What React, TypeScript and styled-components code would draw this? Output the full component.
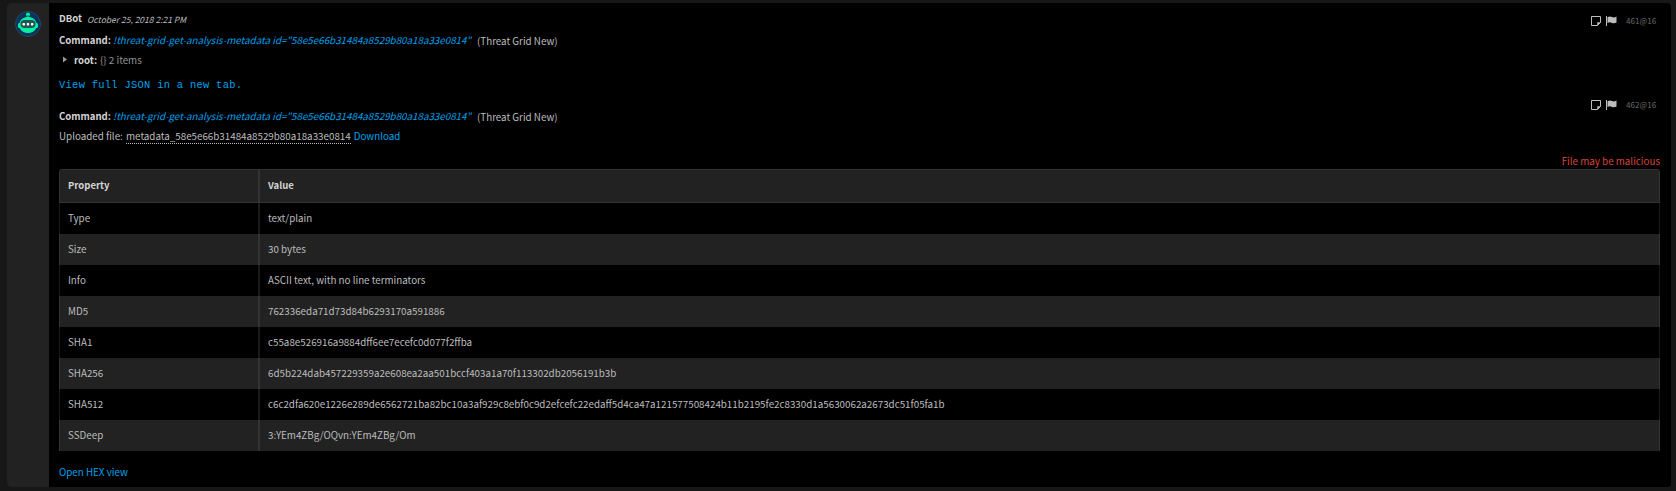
import React from "react";
import styled, { createGlobalStyle } from "styled-components";

const GlobalStyle = createGlobalStyle`
  * { box-sizing: border-box; }
  body {
    margin: 0;
    background: #171717;
    color: #bcbcbc;
    font: 9.81px/20px "Noto Sans CJK SC", "Noto Sans", sans-serif;
    overflow: hidden;
  }
`;

const Page = styled.main`
  height: 491px;
  padding: 3px 5px 4px 7px;
`;

const Entry = styled.article`
  display: flex;
  height: 484px;
  border-radius: 4px;
  overflow: hidden;
  background: #000;
`;

const AvatarRail = styled.aside`
  width: 42px;
  flex: none;
  padding: 8px 0 0 8px;
  background: #222;
  svg { display: block; }
`;

const Content = styled.div`
  flex: 1;
  padding: 6px 11px 0 10px;
`;

const Message = styled.section<{ $height: number }>`
  display: flex;
  justify-content: space-between;
  height: ${(p) => p.$height}px;
`;

const MessageBody = styled.div<{ $offset?: number }>`
  padding-top: ${(p) => p.$offset ?? 0}px;
`;

const Line = styled.div<{ $height: number; $indent?: number; $raise?: number }>`
  display: flex;
  align-items: center;
  height: ${(p) => p.$height}px;
  padding-left: ${(p) => p.$indent ?? 0}px;
  padding-bottom: ${(p) => p.$raise ?? 0}px;
  white-space: pre;
`;

const Author = styled.strong`
  width: 28px;
  padding-bottom: 2px;
  color: #d4d4d4;
  font-weight: 700;
  font-size: 9.5px;
`;

const Timestamp = styled.time`
  font-size: 8.5px;
  font-style: italic;
`;

const Label = styled.strong<{ $width: number }>`
  width: ${(p) => p.$width}px;
  color: #d4d4d4;
  font-weight: 700;
  font-size: 9.6px;
`;

const CommandText = styled.em`
  width: 364px;
  color: #00a0ec;
`;

const Instance = styled.span`
  padding-top: 2px;
`;

const Muted = styled.span`
  color: #949494;
`;

const Link = styled.a<{ $mono?: boolean }>`
  color: #00a0ec;
  ${(p) => p.$mono && `padding-top: 5px; font-family: "Liberation Mono", monospace; font-size: 10.4px; letter-spacing: 0.31px;`}
`;

const FileName = styled.span`
  height: 15px;
  margin: 0 3px 0 1px;
  line-height: 14px;
  border-bottom: 1px dotted #b9b9b9;
`;

const Actions = styled.div`
  display: flex;
  align-items: center;
  height: 23px;
  padding: 1px 4px 0 0;
  color: #bdbdbd;
`;

const EntryId = styled.span`
  width: 30px;
  margin-left: 9px;
  color: #6a6a6a;
  font-size: 8.1px;
  white-space: nowrap;
`;

const Warning = styled.div`
  height: 18px;
  color: #d8443e;
  line-height: 21px;
  text-align: right;
`;

const Table = styled.div`
  border: 1px solid #333;
  border-width: 1px 0 0;
  border-radius: 3px 3px 0 0;
  overflow: hidden;
`;

const Row = styled.div<{ $striped?: boolean; $head?: boolean }>`
  display: grid;
  grid-template-columns: 200px 1fr;
  height: ${(p) => (p.$head ? 33 : 31)}px;
  line-height: ${(p) => (p.$head ? 31 : 30)}px;
  background: ${(p) => (p.$striped || p.$head ? "#222" : "#000")};
  border: solid ${(p) => (p.$striped || p.$head ? "#333" : "#1b1b1b")};
  border-width: 0 1px ${(p) => (p.$head ? 1 : 0)}px;
  ${(p) => p.$head && "color: #d4d4d4; font-weight: 700; font-size: 9.5px;"}
  > :first-child {
    border-right: 2px solid ${(p) => (p.$striped || p.$head ? "#333" : "#1b1b1b")};
  }
`;

const Cell = styled.div`
  padding-left: 8px;
`;

const Footer = styled.footer`
  padding-top: 11px;
`;

const BotAvatar = () => (
  <svg width="26" height="26" viewBox="0 0 26 26">
    <circle cx="13" cy="13" r="12.5" fill="#04345f" stroke="#355366" strokeWidth="0.7" />
    <circle cx="13" cy="3.5" r="2" fill="#00f0a0" />
    <path d="M12.2 4h1.6v3h-1.6z" fill="#00a878" />
    <path d="M3 13.5c0-1 .7-1.500 1.500-1.500C5.500 8.500 8.500 6 13 6s7.500 2.500 8.500 6c.8 0 1.500.5 1.500 1.500v2c0 1-.7 1.500-1.700 1.500-1.500 3.500-4.500 5-8.300 5s-6.800-1.500-8.300-5C3.700 17 3 16.500 3 15.500z" fill="#05efa1" />
    <rect x="5.500" y="9" width="15" height="8" rx="4" fill="#245456" />
    <rect x="7.500" y="12" width="2.500" height="2.500" rx="0.8" fill="#fff" />
    <rect x="11.700" y="12" width="2.500" height="2.500" rx="0.8" fill="#fff" />
    <rect x="15.900" y="12" width="2.500" height="2.500" rx="0.8" fill="#fff" />
  </svg>
);

const NoteIcon = () => (
  <svg width="10" height="10" viewBox="0 0 10 10" fill="none" stroke="currentColor">
    <path d="M.5 .5h9v6l-3 3h-6z" />
    <path d="M9.500 6.500h-3v3z" fill="currentColor" strokeWidth="0.5" />
  </svg>
);

const Flag = styled.svg`
  margin-left: 5px;
`;

const FlagIcon = () => (
  <Flag width="11" height="10" viewBox="0 0 11 10" fill="currentColor">
    <path d="M0 0h1v10H0zM1.500 1.200c2-1 3-.8 4.500-.2s2.500.6 4.500-.5v6c-2 1-3 1-4.500.4S3.500 6 1.500 7z" />
  </Flag>
);

const EntryActions = ({ id }: { id: string }) => (
  <Actions>
    <NoteIcon />
    <FlagIcon />
    <EntryId>{id}</EntryId>
  </Actions>
);

const Command = () => (
  <Line $height={22}>
    <Label $width={54}>Command:</Label>
    <CommandText>!threat-grid-get-analysis-metadata id="58e5e66b31484a8529b80a18a33e0814"</CommandText>
    <Instance>(Threat Grid New)</Instance>
  </Line>
);

const properties = [
  ["Type", "text/plain"],
  ["Size", "30 bytes"],
  ["Info", "ASCII text, with no line terminators"],
  ["MD5", "762336eda71d73d84b6293170a591886"],
  ["SHA1", "c55a8e526916a9884dff6ee7ecefc0d077f2ffba"],
  ["SHA256", "6d5b224dab457229359a2e608ea2aa501bccf403a1a70f113302db2056191b3b"],
  ["SHA512", "c6c2dfa620e1226e289de6562721ba82bc10a3af929c8ebf0c9d2efcefc22edaff5d4ca47a121577508424b11b2195fe2c8330d1a5630062a2673dc51f05fa1b"],
  ["SSDeep", "3:YEm4ZBg/OQvn:YEm4ZBg/Om"],
];

export default function App() {
  return (
    <>
      <GlobalStyle />
      <Page>
        <Entry>
          <AvatarRail><BotAvatar /></AvatarRail>
          <Content>
            <Message $height={84}>
              <MessageBody>
                <Line $height={20}>
                  <Author>DBot</Author>
                  <Timestamp>October 25, 2018 2:21 PM</Timestamp>
                </Line>
                <Command />
                <Line $height={19} $indent={4} $raise={1}>
                  <svg width="11" height="8" viewBox="0 0 11 8" fill="#999"><path d="M0 .5 4 3.500 0 6.500z" /></svg>
                  <Label $width={26}>root:</Label>
                  <Muted>{"{} 2 items"}</Muted>
                </Line>
                <Line $height={24}><Link $mono>View full JSON in a new tab.</Link></Line>
              </MessageBody>
              <EntryActions id="461@16" />
            </Message>
            <Message $height={58}>
              <MessageBody $offset={12}>
                <Command />
                <Line $height={19} $raise={1}>
                  <span>Uploaded file: </span>
                  <FileName>metadata_58e5e66b31484a8529b80a18a33e0814</FileName>
                  <Link>Download</Link>
                </Line>
              </MessageBody>
              <EntryActions id="462@16" />
            </Message>
            <Warning>File may be malicious</Warning>
            <Table>
              <Row $head><Cell>Property</Cell><Cell>Value</Cell></Row>
              {properties.map(([name, value], i) => (
                <Row key={name} $striped={i % 2 === 1}>
                  <Cell>{name}</Cell>
                  <Cell>{value}</Cell>
                </Row>
              ))}
            </Table>
            <Footer><Link>Open HEX view</Link></Footer>
          </Content>
        </Entry>
      </Page>
    </>
  );
}
